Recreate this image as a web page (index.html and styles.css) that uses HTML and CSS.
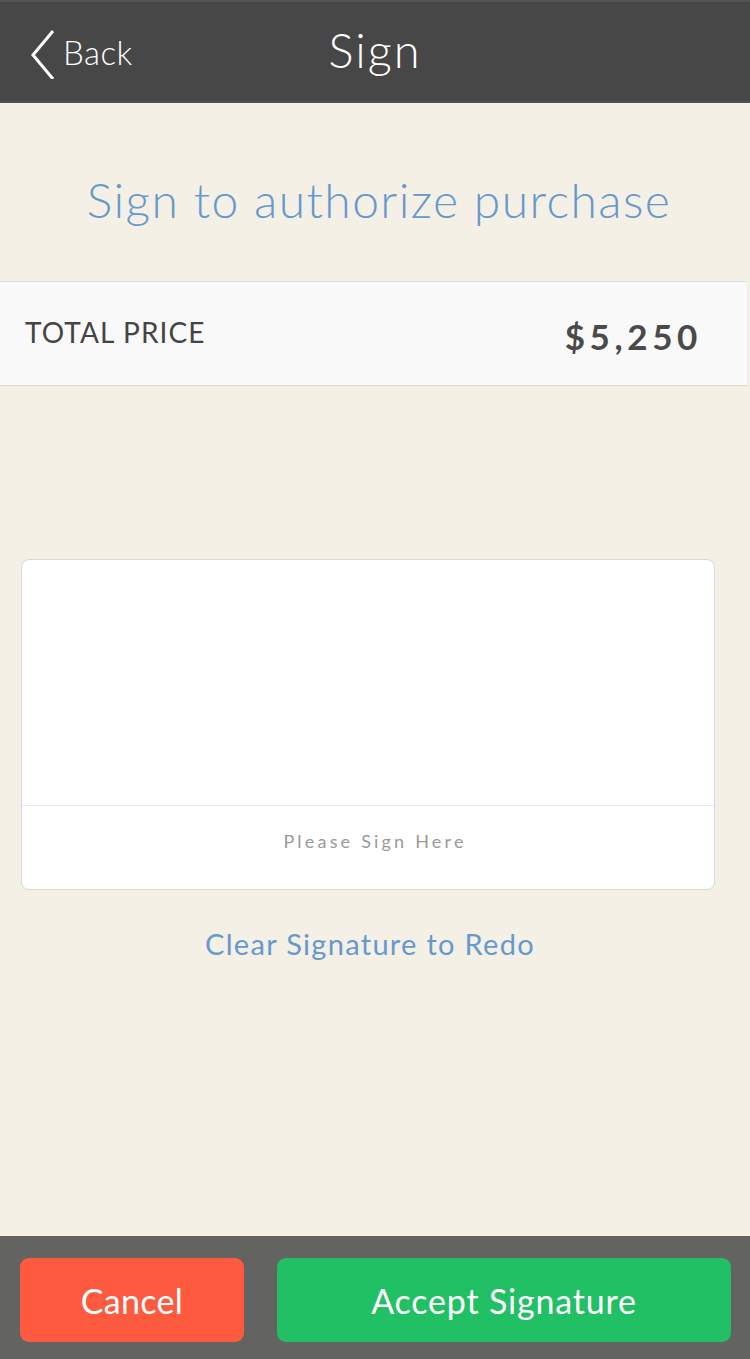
FILE: index.html
```html
<!DOCTYPE html>
<html>
<head>
<meta charset="utf-8">
<link rel="stylesheet" href="styles.css">
</head>
<body>
<div class="app">
  <header class="nav">
    <div class="back">
      <svg class="chev" width="28" height="48" viewBox="0 0 28 48"><polyline points="24,2 4,26 24,50" fill="none" stroke="#fff" stroke-width="3" stroke-linejoin="miter"/></svg>
      <span>Back</span>
    </div>
    <div class="title">Sign</div>
  </header>
  <main class="content">
    <h1 class="headline">Sign to authorize purchase</h1>
    <div class="total">
      <span class="total-label">TOTAL PRICE</span>
      <span class="total-value">$5,250</span>
    </div>
    <div class="sigbox">
      <div class="sigpad"></div>
      <div class="sighint">Please Sign Here</div>
    </div>
    <div class="clear">Clear Signature to Redo</div>
  </main>
  <footer class="bar">
    <button class="btn cancel">Cancel</button>
    <button class="btn accept">Accept Signature</button>
  </footer>
</div>
</body>
</html>
```
FILE: styles.css
```css
* { box-sizing: border-box; }
html, body { margin: 0; padding: 0; }
body { width: 750px; height: 1359px; background: #f4f0e6; font-family: Lato, "Open Sans", sans-serif; }
.app { display: flex; flex-direction: column; height: 1359px; }
.nav { height: 103px; background: #464746; border-top: 2px solid #555; border-bottom: 2px solid #4f504f; display: flex; align-items: center; position: relative; }
.back { display: flex; align-items: center; padding-left: 29px; color: #fff; font-size: 33px; gap: 6px; padding-bottom: 2px; }
.chev { width: 28px; height: 52px; margin-top: 4px; }
.back span { font-weight: 300; letter-spacing: 0.5px; margin-top: 2px; }
.title { position: absolute; left: 0; right: 0; text-align: center; color: #fff; font-size: 47px; font-weight: 300; letter-spacing: 2px; pointer-events: none; top: 20px; }
.content { flex: 1; display: flex; flex-direction: column; }
.headline { margin: 0; padding-top: 68px; padding-left: 8px; height: 178px; text-align: center; font-weight: 300; font-size: 48px; color: #6699cc; letter-spacing: 1.4px; }
.total { width: 747px; height: 105px; background: #f9f9f9; border-top: 1px solid #ddd; border-bottom: 1px solid #d8d8d8; display: flex; align-items: center; justify-content: space-between; padding: 0 49px 0 25px; }
.total-label { font-size: 28px; color: #444; margin-top: -4px; letter-spacing: 1.1px; }
.total-value { font-size: 35px; font-weight: 700; color: #4a4a4a; letter-spacing: 4.6px; margin-top: 5px; margin-right: -4px; }
.sigbox { margin: 173px 35px 0 21px; height: 331px; background: #fff; border: 1px solid #d8d8d8; border-radius: 8px; display: flex; flex-direction: column; }
.sigpad { height: 246px; border-bottom: 1px solid #e8e8e8; }
.sighint { flex: 1; display: flex; align-items: center; justify-content: center; font-size: 18px; color: #999; letter-spacing: 3.2px; padding-bottom: 14px; padding-left: 14px; }
.clear { text-align: center; margin-top: 36px; font-size: 29px; color: #6699cc; font-weight: 400; letter-spacing: 1.3px; padding-right: 10px; }
.bar { height: 123px; background: #636361; display: flex; align-items: flex-start; padding: 22px 19px 0 20px; gap: 33px; }
.btn { border: none; border-radius: 9px; height: 84px; color: #fff; font-family: inherit; font-size: 34px; font-weight: 400; }
.cancel { width: 224px; background: #fd5a40; letter-spacing: 0.3px; }
.accept { flex: 1; background: #22c064; letter-spacing: 0.8px; }
```
